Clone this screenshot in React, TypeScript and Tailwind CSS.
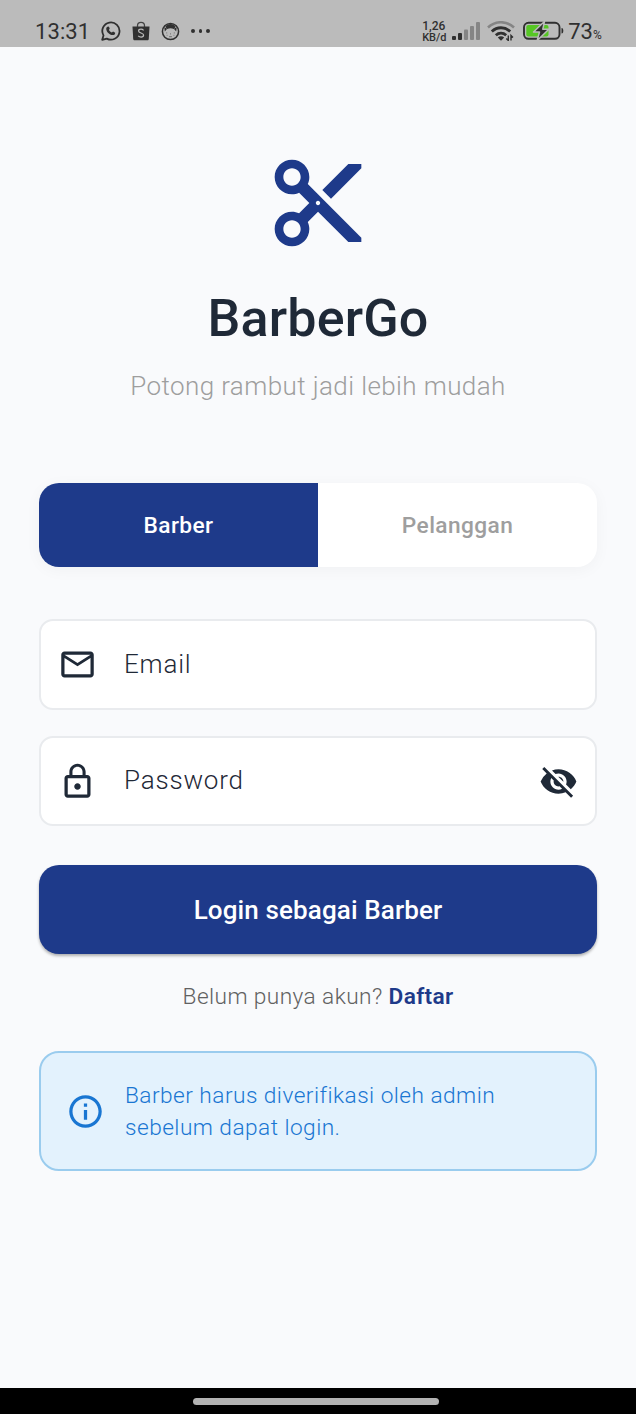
import { useState } from "react";
import {
  MdContentCut,
  MdInfoOutline,
  MdLockOutline,
  MdMailOutline,
  MdVisibility,
  MdVisibilityOff,
} from "react-icons/md";

type Role = "Barber" | "Pelanggan";

const ROLES: Role[] = ["Barber", "Pelanggan"];

function WhatsAppIcon() {
  return (
    <svg viewBox="0 0 20 20" className="size-5" fill="none">
      <path
        d="M1.2 18.8l1.3-4.4A8.6 8.6 0 1 1 5.8 17.6z"
        stroke="#303030"
        strokeWidth="1.8"
        strokeLinejoin="round"
      />
      <path
        d="M7.3 5.4c.4 0 .6.2.8.7l.6 1.4c.1.5-.6.9-.8 1.3.6 1.3 1.6 2.2 2.9 2.8.5-.2.9-1.1 1.3-1l1.7.9c.4.2.4.5.3.9-.2 1.1-1.3 1.8-2.4 1.7-3.5-.5-6.2-3.2-6.5-6.2 0-1.2.9-2.5 2.1-2.5z"
        fill="#303030"
      />
    </svg>
  );
}

function ShopIcon() {
  return (
    <svg viewBox="0 0 18 20" className="h-5 w-[18px]">
      <path d="M5.5 6V4.8C5.5 2.7 7 1.3 9 1.3s3.5 1.4 3.5 3.5V6" fill="none" stroke="#444" strokeWidth="1.3" />
      <path d="M.5 5.5h17l-.7 12.3c-.1 1-.6 1.5-1.5 1.5H2.7c-.9 0-1.4-.5-1.5-1.5z" fill="#303030" />
      <path
        d="M11.6 9.3C10.9 8.6 10 8.2 9 8.2c-1.4 0-2.4.7-2.4 1.8 0 2.5 5 1.4 5 4.1 0 1.2-1 2-2.5 2-1.1 0-2.1-.4-2.9-1.2"
        fill="none"
        stroke="#bbb"
        strokeWidth="1.2"
      />
    </svg>
  );
}

function FaceIcon() {
  return (
    <svg viewBox="0 0 20 20" className="size-[19px]">
      <circle cx="10" cy="10" r="8.5" fill="#bbb" stroke="#303030" strokeWidth="1.6" />
      <path d="M4.5 5C6 2.800 8 2 10 2s4 .8 5.500 3l-2 2.300c-2.300-.8-4.700-.8-7 0z" fill="#303030" />
      <path d="M3.500 5.500l.5 4.500 2.500-3zM16.500 5.500L16 10l-2.500-3z" fill="#303030" />
      <path d="M5.500 11.500h1M13.500 11.500h1M6 14h.8M13.200 14h.8M9.500 12.500h1M8.500 15.500h3" stroke="#666" strokeWidth="1" />
    </svg>
  );
}

function SignalIcon() {
  return (
    <svg viewBox="0 0 28 18" className="h-[18px] w-7">
      <rect x="0" y="14" width="4" height="4" rx="1" fill="#303030" />
      <rect x="6" y="11" width="4" height="7" rx="1" fill="#303030" />
      <rect x="12" y="7.5" width="4" height="10.5" rx="1" fill="#858585" />
      <rect x="18" y="4" width="4" height="14" rx="1" fill="#858585" />
      <rect x="24" y="0" width="4" height="18" rx="1" fill="#858585" />
    </svg>
  );
}

function WifiIcon() {
  return (
    <svg viewBox="0 0 28 20" className="h-5 w-7" fill="none">
      <path d="M1 6.5C8.5-.5 19.5-.5 27 6.5" stroke="#858585" strokeWidth="2.6" />
      <path d="M4.8 10.5c5.3-5 13.1-5 18.4 0" stroke="#303030" strokeWidth="2.8" />
      <path d="M8.8 14.3c3.1-2.8 7.3-2.8 10.4 0" stroke="#303030" strokeWidth="2.8" />
      <path d="M10.8 16.5c1.9-1.7 4.5-1.7 6.4 0L14 19.8z" fill="#303030" />
      <path d="M21.3 14.5v5l-2-2M24 19.5v-5l2 2" stroke="#303030" strokeWidth="1.4" />
    </svg>
  );
}

function BatteryIcon() {
  return (
    <svg viewBox="0 0 41 20" className="h-5 w-[41px]">
      <rect x="1" y="1.8" width="35.5" height="16" rx="4.5" fill="none" stroke="#303030" strokeWidth="1.9" />
      <path d="M38.5 7c1.4.3 1.8 1 1.8 2.8s-.4 2.500-1.800 2.800z" fill="#303030" />
      <rect x="3.3" y="4.1" width="22.2" height="11.5" rx="2" fill="#56c624" />
      <path
        d="M21.5.5L10.5 11h6l-2.3 8.5L25.8 8.2h-6z"
        fill="#303030"
        stroke="#bbb"
        strokeWidth="1.5"
        strokeLinejoin="round"
      />
    </svg>
  );
}

function StatusBar() {
  return (
    <header className="flex h-[47px] items-start justify-between bg-[#bbb] pl-[35px] pr-[34px] pt-[21px] text-[#303030]">
      <div className="flex h-5 items-center">
        <span className="w-[66px] pt-px text-[22px] leading-5 tracking-[0.1px]">13:31</span>
        <WhatsAppIcon />
        <div className="ml-[11px]">
          <ShopIcon />
        </div>
        <div className="ml-[11px]">
          <FaceIcon />
        </div>
        <div className="ml-[11px] flex gap-1">
          <span className="size-[3.5px] rounded-full bg-[#303030]" />
          <span className="size-[3.5px] rounded-full bg-[#303030]" />
          <span className="size-[3.5px] rounded-full bg-[#303030]" />
        </div>
      </div>
      <div className="flex h-5 items-center">
        <div className="w-[30px] pt-0.5 text-[12px] font-medium leading-[11px]">
          <p className="whitespace-nowrap">1,26</p>
          <p className="whitespace-nowrap text-[11px]">KB/d</p>
        </div>
        <SignalIcon />
        <div className="ml-[7px]">
          <WifiIcon />
        </div>
        <div className="ml-2">
          <BatteryIcon />
        </div>
        <span className="ml-1 pt-px text-[22px] leading-5">73</span>
        <span className="mt-[7px] text-[12px] leading-3 tracking-[0.3px]">%</span>
      </div>
    </header>
  );
}

interface RoleToggleProps {
  role: Role;
  onChange: (role: Role) => void;
}

function RoleToggle({ role, onChange }: RoleToggleProps) {
  return (
    <div className="mt-[79px] flex h-[84px] overflow-hidden rounded-[20px] bg-white shadow-[0_3px_16px_rgba(0,0,0,0.04)]">
      {ROLES.map((item) => (
        <button
          key={item}
          type="button"
          onClick={() => onChange(item)}
          className={`flex-1 pt-0.5 text-[22.7px] font-medium tracking-[0.4px] ${
            role === item ? "bg-[#1e3a8a] text-white" : "text-[#9e9e9e]"
          }`}
        >
          {item}
        </button>
      ))}
    </div>
  );
}

const inputClass =
  "ml-[27px] min-w-0 flex-1 bg-transparent pb-px text-[26px] font-light tracking-[0.81px] outline-none placeholder:text-[#1f2937] placeholder:opacity-100";

export default function App() {
  const [role, setRole] = useState<Role>("Barber");
  const [showPassword, setShowPassword] = useState(false);

  return (
    <div className="flex h-[1414px] w-[636px] flex-col bg-[#f9fafc] font-[Roboto,sans-serif] text-[#1f2937]">
      <StatusBar />

      <main className="flex flex-1 flex-col px-[39px] pt-[104px]">
        <div className="flex flex-col items-center">
          <MdContentCut className="size-[104px] text-[#1e3a8a]" />
          <h1 className="mt-[33px] text-[52px] font-medium leading-[62px] tracking-[0.15px]">BarberGo</h1>
          <p className="mt-[18px] whitespace-nowrap text-[26px] font-light leading-9 tracking-[0.4px] text-[#9e9e9e]">
            Potong rambut jadi lebih mudah
          </p>
        </div>

        <RoleToggle role={role} onChange={setRole} />

        <form className="mt-[52px] flex flex-col" onSubmit={(e) => e.preventDefault()}>
          <label className="flex h-[91px] items-center rounded-[14px] border-2 border-[#e9ebee] bg-white px-[17px]">
            <MdMailOutline className="size-[39px] shrink-0" />
            <input type="email" placeholder="Email" className={inputClass} />
          </label>

          <label className="mt-[26px] flex h-[90px] items-center rounded-[14px] border-2 border-[#e9ebee] bg-white px-[17px]">
            <MdLockOutline className="size-[39px] shrink-0" />
            <input
              type={showPassword ? "text" : "password"}
              placeholder="Password"
              className={inputClass}
            />
            <button type="button" onClick={() => setShowPassword(!showPassword)}>
              {showPassword ? (
                <MdVisibility className="size-[39px]" />
              ) : (
                <MdVisibilityOff className="size-[39px]" />
              )}
            </button>
          </label>

          <button
            type="submit"
            className="mt-[39px] h-[89px] rounded-[20px] bg-[#1e3a8a] pt-0.5 text-[26px] font-medium tracking-[0.12px] text-white shadow-[0_2px_3px_rgba(0,0,0,0.3)]"
          >
            Login sebagai {role}
          </button>
        </form>

        <p className="mt-[27px] text-center text-[22.7px] font-light leading-8 tracking-[0.4px] text-[#616161]">
          Belum punya akun? <a className="font-semibold tracking-[0.3px] text-[#1e3a8a]">Daftar</a>
        </p>

        {role === "Barber" && (
          <div className="mt-[38px] flex h-[120px] items-center rounded-[20px] border-2 border-[#9accee] bg-[#e3f2fd] pl-[25px] text-[#1976d2]">
            <MdInfoOutline className="size-[39px] shrink-0" />
            <p className="ml-5 w-[400px] pt-0.5 text-[22.7px] font-light leading-8 tracking-[0.45px]">
              Barber harus diverifikasi oleh admin sebelum dapat login.
            </p>
          </div>
        )}
      </main>

      <footer className="flex h-[26px] justify-center bg-black pr-1 pt-[10px]">
        <div className="h-[7px] w-[246px] rounded-full bg-[#b3b3b3]" />
      </footer>
    </div>
  );
}
